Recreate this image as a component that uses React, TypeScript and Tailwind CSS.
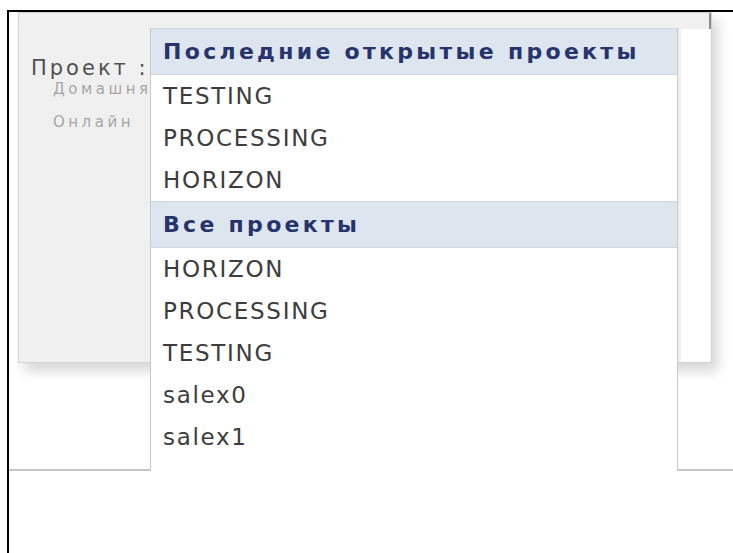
import React from "react";

const recent = ["TESTING", "PROCESSING", "HORIZON"];
const all = ["HORIZON", "PROCESSING", "TESTING", "salex0", "salex1"];

function GroupHeader({ title }: { title: string }) {
	return (
		<div className="h-[47px] flex items-center pl-3 bg-[#dde5ee] border-y border-[#cdd6df] text-[22px] font-bold tracking-[3.3px] text-[#27336d]">
			{title}
		</div>
	);
}

function Item({ label }: { label: string }) {
	return (
		<div className="h-[42px] flex items-center pl-3 text-[23px] tracking-[1.7px] text-[#3d3d3d]">
			{label}
		</div>
	);
}

function ProjectList() {
	return (
		<div className="absolute left-[141px] top-[16px] w-[528px] h-[443px] bg-white border-l border-r border-[#c8c8c8]">
			<GroupHeader title="Последние открытые проекты" />
			{recent.map((p) => (
				<Item key={"r" + p} label={p} />
			))}
			<GroupHeader title="Все проекты" />
			{all.map((p) => (
				<Item key={"a" + p} label={p} />
			))}
		</div>
	);
}

export default function App() {
	return (
		<div className="w-[733px] h-[553px] bg-white overflow-hidden font-['DejaVu_Sans',sans-serif]">
			<div className="ml-[7px] mt-[10px] h-[543px] border-l-2 border-t-2 border-black">
				<div className="relative h-[459px] border-b-2 border-[#c6c6c6] bg-white">
					{/* settings dialog behind the dropdown */}
					<div className="ml-[9px] w-[694px] h-[351px] flex bg-[#f0f0f0] border border-[#d2d2d2] shadow-[6px_8px_12px_rgba(0,0,0,0.16)]">
						<div className="flex-1 pl-3 pt-[43px] overflow-hidden">
							<div className="text-[21px] leading-6 tracking-[3px] text-[#505050]">Проект :</div>
							<div className="pl-[22px] flex flex-col gap-[15px] text-[15px] leading-[18px] tracking-[3.5px] text-[#a6a6a6] whitespace-nowrap">
								<span>Домашняя</span>
								<span>Онлайн</span>
							</div>
						</div>
						<div className="w-[30px] flex flex-col">
							<div className="h-[16px] flex justify-end">
								<div className="w-[2px] h-[16px] bg-[#8a8a8a]" />
							</div>
							<div className="flex-1 bg-white" />
						</div>
					</div>
					<ProjectList />
				</div>
			</div>
		</div>
	);
}
